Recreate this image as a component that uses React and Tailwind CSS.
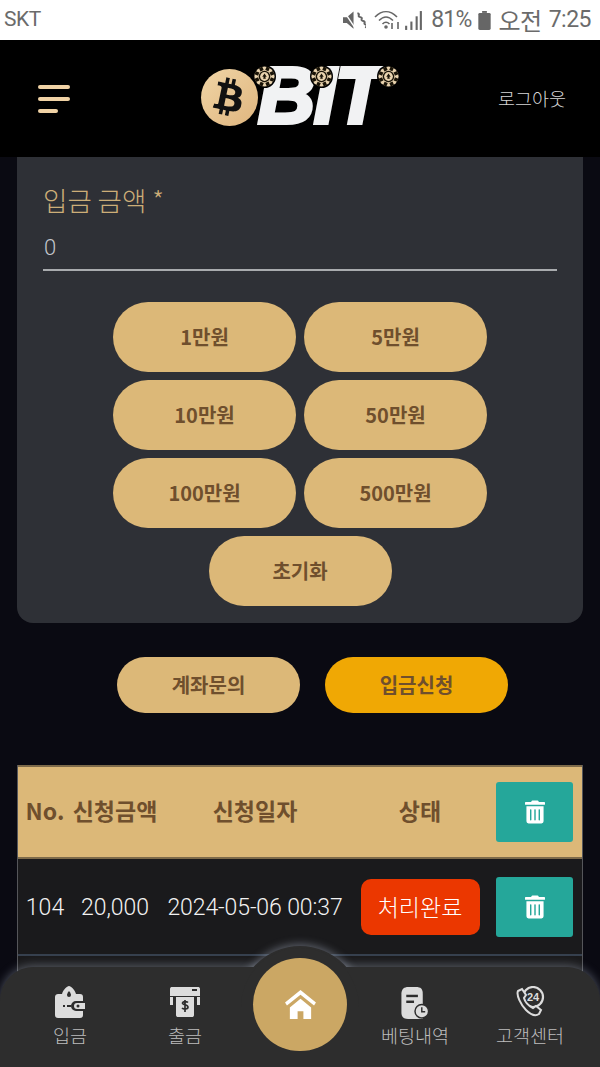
import React from "react";
import { FaTrashAlt, FaBtc } from "react-icons/fa";

const KR = "font-['Noto_Sans_CJK_KR','Noto_Sans',sans-serif]";

function Chip({ className }) {
  const spokes = [0, 45, 90, 135, 180, 225, 270, 315];
  return (
    <svg viewBox="0 0 24 24" className={className}>
      <circle cx="12" cy="12" r="12" fill="#000" />
      <circle cx="12" cy="12" r="10.5" fill="#e8d2ad" />
      {spokes.map((a) => (
        <rect key={a} x="10.2" y="1.5" width="3.6" height="4" fill="#1a1408" transform={`rotate(${a + 22} 12 12)`} />
      ))}
      <circle cx="12" cy="12" r="6" fill="#1a1408" />
      <circle cx="12" cy="12" r="4.6" fill="#e8d2ad" />
      <path d="M12 8.8l2.3 3.4h-1.5l.6 2.2h-2.8l.6-2.2H9.7z" fill="#1a1408" />
    </svg>
  );
}

function Logo() {
  return (
    <div className="relative w-[200px] h-[62px]">
      <div className="absolute left-0 top-[2px] w-[57px] h-[57px] rounded-full bg-gradient-to-br from-[#f0d5a6] to-[#dfb57e] flex items-center justify-center">
        <FaBtc className="text-[#111] w-[28px] h-[38px] rotate-12" />
      </div>
      <span className="absolute left-[57px] top-[-11px] text-[79px] leading-[80px] italic font-black text-[#f1f2f3] font-['Liberation_Sans',sans-serif] tracking-[-1px] [-webkit-text-stroke:4px_#f1f2f3]">
        BIT
      </span>
      <Chip className="absolute left-[52px] top-[-2px] w-[23px] h-[23px]" />
      <Chip className="absolute left-[109px] top-[-2px] w-[23px] h-[23px]" />
      <Chip className="absolute left-[176px] top-[-2px] w-[23px] h-[23px]" />
    </div>
  );
}

function StatusBar() {
  return (
    <div className="h-10 bg-white flex items-center justify-between pl-1 pr-[9px] text-[#6b6b6b] font-['Roboto',sans-serif]">
      <span className="text-[21px] tracking-[-0.5px]">SKT</span>
      <div className={`flex items-center text-[24px] tracking-[-0.5px] ${KR}`}>
        <svg viewBox="0 0 24 20" className="w-[23px] h-[20px] mr-[8px]" fill="#666">
          <path d="M0 7h4l7-6v18l-7-6H0z" />
          <path d="M1 1l12 18" stroke="#fff" strokeWidth="1.5" />
          <path d="M15 3c4 1-1 3 3 4s-1 3 3 4-1 3 3 4-1 2 0 3" stroke="#666" strokeWidth="2" fill="none" />
        </svg>
        <svg viewBox="0 0 28 20" className="w-[28px] h-[20px] mr-[2px]" fill="none" stroke="#666" strokeWidth="1.6">
          <path d="M1 7c7-7 15-7 22 0" />
          <path d="M5 10.500c4.500-4.500 9.500-4.500 14 0" />
          <path d="M8.500 14c2.500-2.500 4.500-2.500 7 0" />
          <circle cx="12" cy="17" r="1" fill="#666" />
          <path d="M18 13v6M24 12v7" />
        </svg>
        <svg viewBox="0 0 18 20" className="w-[19px] h-[21px] mr-[8px]" fill="#666">
          <rect x="1" y="15" width="2" height="4" />
          <rect x="6" y="11" width="2" height="8" />
          <rect x="11" y="6" width="2" height="13" />
          <rect x="15" y="1" width="2" height="18" />
        </svg>
        <span className="font-['Roboto',sans-serif] text-[23px] tracking-[-0.8px] mr-[7px]">81%</span>
        <svg viewBox="0 0 13 20" className="w-[13px] h-[19px] mr-[7px]" fill="#666">
          <rect x="4" y="0" width="5" height="2" />
          <rect x="0" y="2" width="13" height="18" rx="1.500" />
        </svg>
        <span className="mr-[7px]">오전</span>
        <span className="font-['Roboto',sans-serif] text-[23px]">7:25</span>
      </div>
    </div>
  );
}

function Header() {
  return (
    <header className="h-[117px] bg-black flex items-center justify-between pl-[38px] pr-[34px]">
      <div className="flex flex-col gap-[8px] w-8">
        <div className="h-1 w-8 rounded-full bg-[#f0d2a5]" />
        <div className="h-1 w-8 rounded-full bg-[#f0d2a5]" />
        <div className="h-1 w-5 rounded-full bg-[#f0d2a5]" />
      </div>
      <div className="ml-[34px] mt-[-2px]"><Logo /></div>
      <span className={`text-[18.5px] text-[#d6d6d6] font-light ${KR}`}>로그아웃</span>
    </header>
  );
}

function Pill({ children, className = "" }) {
  return (
    <button className={`w-[183px] h-[70px] rounded-[35px] bg-[#dcb878] text-[#6f4f2d] text-[20px] font-bold ${KR} ${className}`}>
      {children}
    </button>
  );
}

function DepositCard() {
  return (
    <section className="mx-[17px] h-[466px] rounded-b-[16px] bg-[#2e3036] pt-[26px] px-[26px]">
      <div className={`text-[26.5px] leading-[34px] font-light text-[#cdae78] ${KR}`}>입금 금액 *</div>
      <div className="mt-[13px] h-[41px] border-b-2 border-[#a9abae] text-[22px] leading-[36px] pl-[1px] text-[#c3c6cc] font-['Roboto',sans-serif] font-light">0</div>
      <div className="mt-[31px] flex flex-wrap justify-center gap-x-2 gap-y-2">
        <Pill>1만원</Pill>
        <Pill>5만원</Pill>
        <Pill>10만원</Pill>
        <Pill>50만원</Pill>
        <Pill>100만원</Pill>
        <Pill>500만원</Pill>
        <Pill>초기화</Pill>
      </div>
    </section>
  );
}

const COLS = "grid grid-cols-[54px_86px_194px_136px_94px] items-center";

function TrashBtn() {
  return (
    <button className="ml-[8px] w-[77px] h-[60px] rounded-[3px] bg-[#25a79a] flex items-center justify-center">
      <FaTrashAlt className="w-[20px] h-[24px] text-white" />
    </button>
  );
}

function Table() {
  return (
    <section className="mt-[52px] mx-[17px] border-x border-[#55565a] bg-[#1a1a1c]">
      <div className={`${COLS} h-[94px] bg-[#dcb878] border-y-2 border-[#7d6a4a] text-[#6f4f2d] text-[23px] font-bold ${KR}`}>
        <div className="text-center whitespace-nowrap pb-[3px]">No.</div>
        <div className="text-center whitespace-nowrap pb-[3px]">신청금액</div>
        <div className="text-center pb-[3px]">신청일자</div>
        <div className="text-center pb-[3px]">상태</div>
        <TrashBtn />
      </div>
      <div className={`${COLS} h-[97px] border-b-2 border-[#36404e] text-[23px] text-[#f2f2f2] font-light font-['Roboto',sans-serif]`}>
        <div className="text-center pt-[3px]">104</div>
        <div className="text-center pt-[3px]">20,000</div>
        <div className="text-center whitespace-nowrap tracking-[-0.1px] pt-[3px]">2024-05-06 00:37</div>
        <div className="flex justify-center">
          <span className={`w-[119px] h-[56px] rounded-[10px] bg-[#eb3700] text-white text-[23px] font-light flex items-center justify-center ${KR}`}>처리완료</span>
        </div>
        <TrashBtn />
      </div>
      <div className="h-[30px]" />
    </section>
  );
}

function NavItem({ icon, label, className = "" }) {
  return (
    <div className={`flex flex-col items-center w-[110px] ${className}`}>
      <div className="h-[32px] flex items-center justify-center">{icon}</div>
      <span className={`mt-[4px] text-[18.5px] leading-[26px] font-light text-[#bdbdbd] ${KR}`}>{label}</span>
    </div>
  );
}

const WalletIcon = (
  <svg viewBox="0 0 30 32" className="w-[30px] h-[32px]">
    <path d="M0 11c0-2 1.500-3 3-3h4c1-4 5-8 7-8s6 4 7 8h4c2 0 3 1 3 3v4h-7a5 5 0 0 0 0 10h7v4c0 2-1 3-3 3H3c-2 0-3-1-3-3z" fill="#dcdcdc" />
    <path d="M22 17h8v6h-8a3 3 0 0 1 0-6z" fill="#dcdcdc" />
    <circle cx="23" cy="20" r="1.500" fill="#2d2d2d" />
    <path d="M14 5c1.500 2 2 3 2 4a2 2 0 0 1-4 0c0-1 .5-2 2-4z" fill="#2d2d2d" />
    <rect x="12" y="19" width="4" height="2" fill="#2d2d2d" />
    <rect x="8" y="19" width="2" height="2" fill="#2d2d2d" />
  </svg>
);

const AtmIcon = (
  <svg viewBox="0 0 30 32" className="w-[30px] h-[32px]">
    <path d="M0 3c0-1.500 1-2 2-2h26c1 0 2 .5 2 2v7H0z" fill="#dcdcdc" />
    <rect x="22" y="3" width="5" height="2" fill="#2d2d2d" />
    <rect x="0" y="11" width="3" height="8" fill="#dcdcdc" />
    <rect x="27" y="11" width="3" height="8" fill="#dcdcdc" />
    <path d="M6 11h18v18c0 1.500-1 2-2 2H8c-1 0-2-.5-2-2z" fill="#dcdcdc" />
    <path d="M15 14v12M18 16.500c-1-1-5-1.500-5.500.5s5.500 1.500 5.500 4-4.500 2.500-6 1" stroke="#2d2d2d" strokeWidth="1.700" fill="none" />
  </svg>
);

const DocIcon = (
  <svg viewBox="0 0 30 34" className="w-[30px] h-[33px]">
    <path d="M1 8c0-5 3-7 7-7h8c5 0 7 2 7 7v26H8c-5 0-7-2-7-7z" fill="#dcdcdc" />
    <rect x="6" y="9" width="12" height="2.500" fill="#2d2d2d" />
    <rect x="6" y="15" width="8" height="2.500" fill="#2d2d2d" />
    <circle cx="22" cy="26" r="7" fill="#dcdcdc" stroke="#2d2d2d" strokeWidth="1.500" />
    <path d="M22 22v4.500h3.500" stroke="#2d2d2d" strokeWidth="1.500" fill="none" />
  </svg>
);

const PhoneIcon = (
  <svg viewBox="0 0 30 32" className="w-[30px] h-[32px]" fill="none" stroke="#dcdcdc" strokeWidth="2">
    <circle cx="18" cy="11" r="10" fill="#2d2d2d" strokeWidth="2.200" />
    <text x="18" y="15" textAnchor="middle" fontSize="11" fontWeight="700" fill="#dcdcdc" stroke="none" fontFamily="Liberation Sans">24</text>
    <path d="M3 5l4-2 4 6-2 3c1 4 5 8 9 10l3-2 5 4-2 4c-3 2-8 1-13-4S1 9 3 5z" fill="#2d2d2d" />
  </svg>
);

function BottomNav() {
  return (
    <nav className="absolute left-0 right-0 bottom-0 h-[100px] rounded-t-[34px] bg-[#2d2d2d] shadow-[0_-2px_10px_rgba(190,200,220,0.35)]">
      <div className="absolute left-[238px] top-[-21px] w-[124px] h-[120px] rounded-t-full bg-[#2d2d2d] shadow-[0_-2px_8px_rgba(190,200,220,0.4)]" />
      <div className="absolute inset-0 rounded-t-[34px] bg-[#2d2d2d]" />
      <div className="absolute left-[241px] top-[-19px] w-[118px] h-[60px] rounded-t-full bg-[#2d2d2d]" />
      <div className="relative flex items-start pt-[19px]">
        <NavItem icon={WalletIcon} label="입금" className="ml-[15px]" />
        <NavItem icon={AtmIcon} label="출금" className="ml-[5px]" />
        <div className="ml-[13px] mt-[-28px] w-[94px] h-[93px] rounded-full bg-[#cba764] flex items-center justify-center">
          <svg viewBox="0 0 32 30" className="w-[31px] h-[29px]" fill="#fff">
            <path d="M16 0L32 13l-2 3L16 5 2 16l-2-3z" />
            <path d="M5 18L16 9l11 9v12h-8v-8h-6v8H5z" />
          </svg>
        </div>
        <NavItem icon={DocIcon} label="베팅내역" className="ml-[13px]" />
        <NavItem icon={PhoneIcon} label="고객센터" className="ml-[5px]" />
      </div>
    </nav>
  );
}

export default function App() {
  return (
    <div className="relative w-[600px] h-[1067px] overflow-hidden bg-[#0a0a12]">
      <StatusBar />
      <Header />
      <DepositCard />
      <div className="mt-[34px] flex pl-[117px] gap-[25px]">
        <Pill className="!h-[56px] !rounded-[28px] !text-[20px]">계좌문의</Pill>
        <Pill className="!h-[56px] !rounded-[28px] !text-[20px] !bg-[#f0a804]">입금신청</Pill>
      </div>
      <Table />
      <BottomNav />
    </div>
  );
}
